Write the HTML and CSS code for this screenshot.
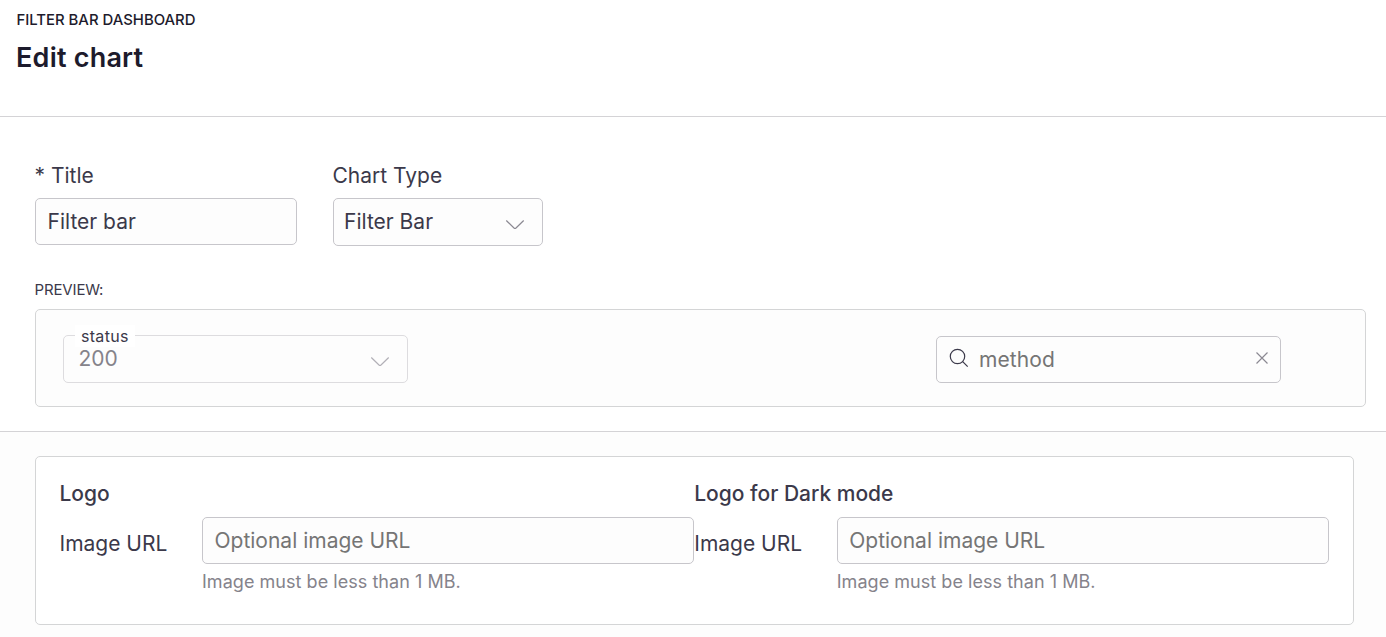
FILE: index.html
```html
<!DOCTYPE html>
<html lang="en">
<head>
<meta charset="utf-8">
<title>Edit chart</title>
<link rel="stylesheet" href="styles.css">
</head>
<body>
<header class="head">
  <div class="crumb">FILTER BAR DASHBOARD</div>
  <h1>Edit chart</h1>
</header>
<section class="main">
  <div class="fields">
    <div class="field title"><div class="label">* Title</div><div class="input">Filter bar</div></div>
    <div class="field type"><div class="label">Chart Type</div><div class="input">Filter Bar<svg class="chev" width="20" height="12" viewBox="0 0 20 12"><path d="M1.300 1.500 9 9q1 .9 2 0l7.700-7.500"/></svg></div></div>
  </div>
  <div class="plabel">PREVIEW:</div>
  <div class="preview">
    <div class="status"><span class="legend">status</span><span>200</span><svg class="chev" width="20" height="12" viewBox="0 0 20 12"><path d="M1.300 1.500 9 9q1 .9 2 0l7.700-7.500"/></svg></div>
    <div class="method"><svg class="mag" width="20" height="20" viewBox="0 0 20 20"><circle cx="8.500" cy="8.500" r="7.200"/><path d="m13.700 13.700 5 5"/></svg><span>method</span><svg class="x" width="12" height="12" viewBox="0 0 12 12"><path d="m.5.5 11 11m0-11-11 11"/></svg></div>
  </div>
</section>
<section class="bottom">
  <div class="card">
    <div class="col"><h2>Logo</h2><div class="row"><span class="name">Image URL</span><div class="wrap"><div class="input ph">Optional image URL</div><div class="hint">Image must be less than 1 MB.</div></div></div></div>
    <div class="col"><h2>Logo for Dark mode</h2><div class="row"><span class="name">Image URL</span><div class="wrap"><div class="input ph">Optional image URL</div><div class="hint">Image must be less than 1 MB.</div></div></div></div>
  </div>
</section>
</body>
</html>
```
FILE: styles.css
```css
* { box-sizing: border-box; }
body { margin: 0; height: 637px; overflow: hidden; background: #fff; font: 21px/26px Inter, sans-serif; color: #3b394a; }
.head { height: 117px; padding: 10px 16px; border-bottom: 1px solid #d4d3d6; color: #1d1b2c; }
.crumb { padding-left: .4px; font-size: 14.9px; line-height: 20px; font-weight: 500; }
h1 { margin: 11px 0 0; font-size: 27px; line-height: 34px; font-weight: 600; letter-spacing: .22px; }
.main { height: 315px; padding: 46px 20px 0 35px; border-bottom: 1px solid #d4d3d6; }
.fields { display: flex; gap: 36px; height: 117px; }
.title { width: 262px; }
.type { width: 210px; }
.label { margin: 0 0 9px -.5px; }
.input { display: flex; align-items: center; height: 47px; padding: 0 11.5px; background: #fdfdfd; border: 1px solid #c7c6cb; border-radius: 5px; }
.type .input { height: 48px; padding: 0 17px 0 10px; justify-content: space-between; }
svg { fill: none; stroke: #8b8992; stroke-width: 1.2; flex: none; }
.chev { margin-top: 5px; }
.plabel { margin-left: -.5px; font-size: 15px; line-height: 20px; letter-spacing: -.15px; }
.preview { display: flex; justify-content: space-between; margin-top: 9px; height: 98px; padding: 25px 84px 0 27px; background: #fdfdfd; border: 1px solid #d4d5d6; border-radius: 5px; }
.status { position: relative; display: flex; justify-content: space-between; align-items: center; width: 345px; height: 48px; padding: 0 17px 0 14.5px; border: 1px solid #dddcdf; border-radius: 5px; color: #85838b; }
.status .chev { stroke: #b2b0b7; }
.legend { position: absolute; left: 11px; top: -11px; padding: 1px 6px; background: #fff; font-size: 16px; line-height: 20px; letter-spacing: .3px; color: #3b394a; }
.method { display: flex; align-items: center; width: 345px; height: 47px; margin-top: 1px; padding: 0 12px; background: #fdfdfd; border: 1px solid #c7c6cb; border-radius: 5px; color: #757575; letter-spacing: .1px; }
.mag { margin: -3px 10px 0 0; stroke: #3b394a; }
.x { margin: -4px 0 0 auto; }
.bottom { height: 205px; padding: 24px 32px 0 35px; background: #fdfdfd; }
.card { display: flex; height: 169px; padding: 24px 24px 24px 23.5px; background: #fff; border: 1px solid #d4d5d6; border-radius: 5px; }
.col { flex: 1; }
h2 { margin: 0 0 10px; font-size: 21px; line-height: 26px; font-weight: 500; }
.row { display: flex; }
.name { width: 142.5px; padding-top: 14px; }
.wrap { flex: 1; }
.ph { color: #757575; }
.hint { margin-top: 7px; font-size: 18px; line-height: 22px; letter-spacing: .04px; color: #85838b; }
```
